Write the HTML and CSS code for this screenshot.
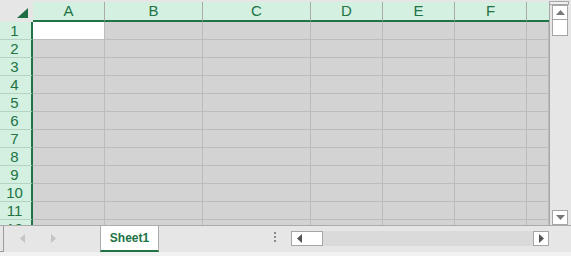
FILE: index.html
```html
<!DOCTYPE html>
<html lang="en">
<head>
    <meta charset="UTF-8">
    <title>Sheet1</title>
    <link rel="stylesheet" href="styles.css">
</head>
<body>
    <div class="app">
        <div class="main">
            <div class="sheet">
                <div class="corner">
                    <svg width="11" height="10" viewBox="0 0 11 10"><polygon points="11,0 11,10 0,10" fill="#1f6e43"/></svg>
                </div>
                <div class="ch">A</div>
                <div class="ch">B</div>
                <div class="ch">C</div>
                <div class="ch">D</div>
                <div class="ch">E</div>
                <div class="ch">F</div>
                <div class="ch last"></div>

                <div class="rh">1</div><div class="c active"></div><div class="c"></div><div class="c"></div><div class="c"></div><div class="c"></div><div class="c"></div><div class="c"></div>
                <div class="rh">2</div><div class="c"></div><div class="c"></div><div class="c"></div><div class="c"></div><div class="c"></div><div class="c"></div><div class="c"></div>
                <div class="rh">3</div><div class="c"></div><div class="c"></div><div class="c"></div><div class="c"></div><div class="c"></div><div class="c"></div><div class="c"></div>
                <div class="rh">4</div><div class="c"></div><div class="c"></div><div class="c"></div><div class="c"></div><div class="c"></div><div class="c"></div><div class="c"></div>
                <div class="rh">5</div><div class="c"></div><div class="c"></div><div class="c"></div><div class="c"></div><div class="c"></div><div class="c"></div><div class="c"></div>
                <div class="rh">6</div><div class="c"></div><div class="c"></div><div class="c"></div><div class="c"></div><div class="c"></div><div class="c"></div><div class="c"></div>
                <div class="rh">7</div><div class="c"></div><div class="c"></div><div class="c"></div><div class="c"></div><div class="c"></div><div class="c"></div><div class="c"></div>
                <div class="rh">8</div><div class="c"></div><div class="c"></div><div class="c"></div><div class="c"></div><div class="c"></div><div class="c"></div><div class="c"></div>
                <div class="rh">9</div><div class="c"></div><div class="c"></div><div class="c"></div><div class="c"></div><div class="c"></div><div class="c"></div><div class="c"></div>
                <div class="rh">10</div><div class="c"></div><div class="c"></div><div class="c"></div><div class="c"></div><div class="c"></div><div class="c"></div><div class="c"></div>
                <div class="rh">11</div><div class="c"></div><div class="c"></div><div class="c"></div><div class="c"></div><div class="c"></div><div class="c"></div><div class="c"></div>
                <div class="rh">12</div><div class="c"></div><div class="c"></div><div class="c"></div><div class="c"></div><div class="c"></div><div class="c"></div><div class="c"></div>
            </div>

            <div class="vscroll">
                <div class="vcap"></div>
                <div class="sbtn vbtn">
                    <svg width="9" height="5" viewBox="0 0 9 5"><polygon points="4.5,0 9,5 0,5" fill="#777"/></svg>
                </div>
                <div class="vthumb"></div>
                <div class="vtrack"></div>
                <div class="sbtn vbtn">
                    <svg width="9" height="5" viewBox="0 0 9 5"><polygon points="0,0 9,0 4.5,5" fill="#777"/></svg>
                </div>
            </div>
        </div>

        <div class="tabbar">
            <div class="split-handle"></div>
            <div class="nav-arrows">
                <svg width="5" height="9" viewBox="0 0 5 9"><polygon points="5,0 5,9 0,4.5" fill="#c4c4c4"/></svg>
                <svg width="5" height="9" viewBox="0 0 5 9"><polygon points="0,0 0,9 5,4.5" fill="#c4c4c4"/></svg>
            </div>
            <div class="tab">Sheet1</div>
            <div class="dots"><span></span><span></span><span></span></div>
            <div class="hscroll">
                <div class="sbtn hbtn">
                    <svg width="5" height="9" viewBox="0 0 5 9"><polygon points="5,0 5,9 0,4.5" fill="#555"/></svg>
                </div>
                <div class="hthumb"></div>
                <div class="htrack"></div>
                <div class="sbtn hbtn">
                    <svg width="5" height="9" viewBox="0 0 5 9"><polygon points="0,0 0,9 5,4.5" fill="#555"/></svg>
                </div>
            </div>
        </div>
        <div class="statusline"></div>
    </div>
</body>
</html>
```

FILE: styles.css
```css
body {
    margin: 0;
    padding: 0;
    background: #e6e6e6;
    font-family: "Liberation Sans", Arial, sans-serif;
}
.app {
    width: 571px;
    height: 256px;
    padding-top: 2px;
    box-sizing: border-box;
    display: flex;
    flex-direction: column;
    overflow: hidden;
}
.main {
    display: flex;
    height: 223px;
}
.sheet {
    display: grid;
    grid-template-columns: 33px 72px 98px 108px 72px 72px 72px 22px;
    grid-template-rows: 20px;
    grid-auto-rows: 18px;
    width: 549px;
    height: 223px;
    overflow: hidden;
    border-right: 1px solid #a6a6a6;
}
.corner {
    background: #e6e6e6;
    display: flex;
    justify-content: flex-end;
    align-items: flex-end;
    padding: 0 5px 4px 0;
}
.ch {
    background: #d3f0e0;
    color: #217346;
    font-size: 15px;
    line-height: 18px;
    text-align: center;
    box-sizing: border-box;
    border-right: 1px solid #ababab;
    border-bottom: 2px solid #217346;
}
.ch.last {
    border-right: none;
}
.rh {
    background: #d3f0e0;
    color: #217346;
    font-size: 15px;
    line-height: 17px;
    text-align: center;
    padding-right: 2px;
    box-sizing: border-box;
    border-right: 2px solid #217346;
    border-bottom: 1px solid #b7d3c3;
}
.c {
    background: #d3d3d3;
    box-sizing: border-box;
    border-right: 1px solid #bcbcbc;
    border-bottom: 1px solid #bcbcbc;
}
.c.active {
    background: #ffffff;
}
.vscroll {
    width: 21px;
    display: flex;
    flex-direction: column;
    align-items: flex-start;
}
.vcap {
    width: 20px;
    height: 4px;
    margin-left: -1px;
    margin-top: -1px;
    box-sizing: border-box;
    border: 1px solid #a6a6a6;
    background: #efefef;
}
.sbtn {
    background: #ffffff;
    border: 1px solid #a6a6a6;
    box-sizing: border-box;
    display: flex;
    align-items: center;
    justify-content: center;
}
.vbtn {
    width: 16px;
    height: 15px;
    margin-left: 2px;
}
.vthumb {
    width: 16px;
    height: 17px;
    margin-left: 2px;
    margin-top: -1px;
    background: #ffffff;
    border: 1px solid #a6a6a6;
    box-sizing: border-box;
}
.vtrack {
    flex: 1;
}
.tabbar {
    height: 27px;
    border-top: 1px solid #ababab;
    box-sizing: border-box;
    display: flex;
    align-items: flex-start;
}
.split-handle {
    width: 4px;
    height: 26px;
    box-sizing: border-box;
    border: 1px solid #9a9a9a;
    border-left: none;
    border-top: none;
    background: #e6e6e6;
}
.nav-arrows {
    width: 96px;
    height: 24px;
    display: flex;
    align-items: center;
    gap: 26px;
    padding-left: 16px;
    box-sizing: border-box;
}
.tab {
    width: 59px;
    height: 26px;
    box-sizing: border-box;
    background: #ffffff;
    border-left: 1px solid #ababab;
    border-right: 1px solid #ababab;
    border-bottom: 2px solid #217346;
    color: #217346;
    font-size: 12px;
    font-weight: bold;
    line-height: 24px;
    text-align: center;
}
.dots {
    margin-left: 115px;
    margin-top: 6px;
    width: 17px;
    display: flex;
    flex-direction: column;
    gap: 2px;
}
.dots span {
    width: 2px;
    height: 2px;
    background: #8a8a8a;
}
.hscroll {
    width: 258px;
    height: 15px;
    margin-top: 5px;
    display: flex;
    background: #dadada;
}
.hbtn {
    width: 16px;
    height: 15px;
}
.hthumb {
    width: 17px;
    height: 15px;
    margin-left: -1px;
    background: #ffffff;
    border: 1px solid #a6a6a6;
    border-left: none;
    box-sizing: border-box;
}
.htrack {
    flex: 1;
}
.statusline {
    flex: 1;
    background: #f1f1f1;
}
```
